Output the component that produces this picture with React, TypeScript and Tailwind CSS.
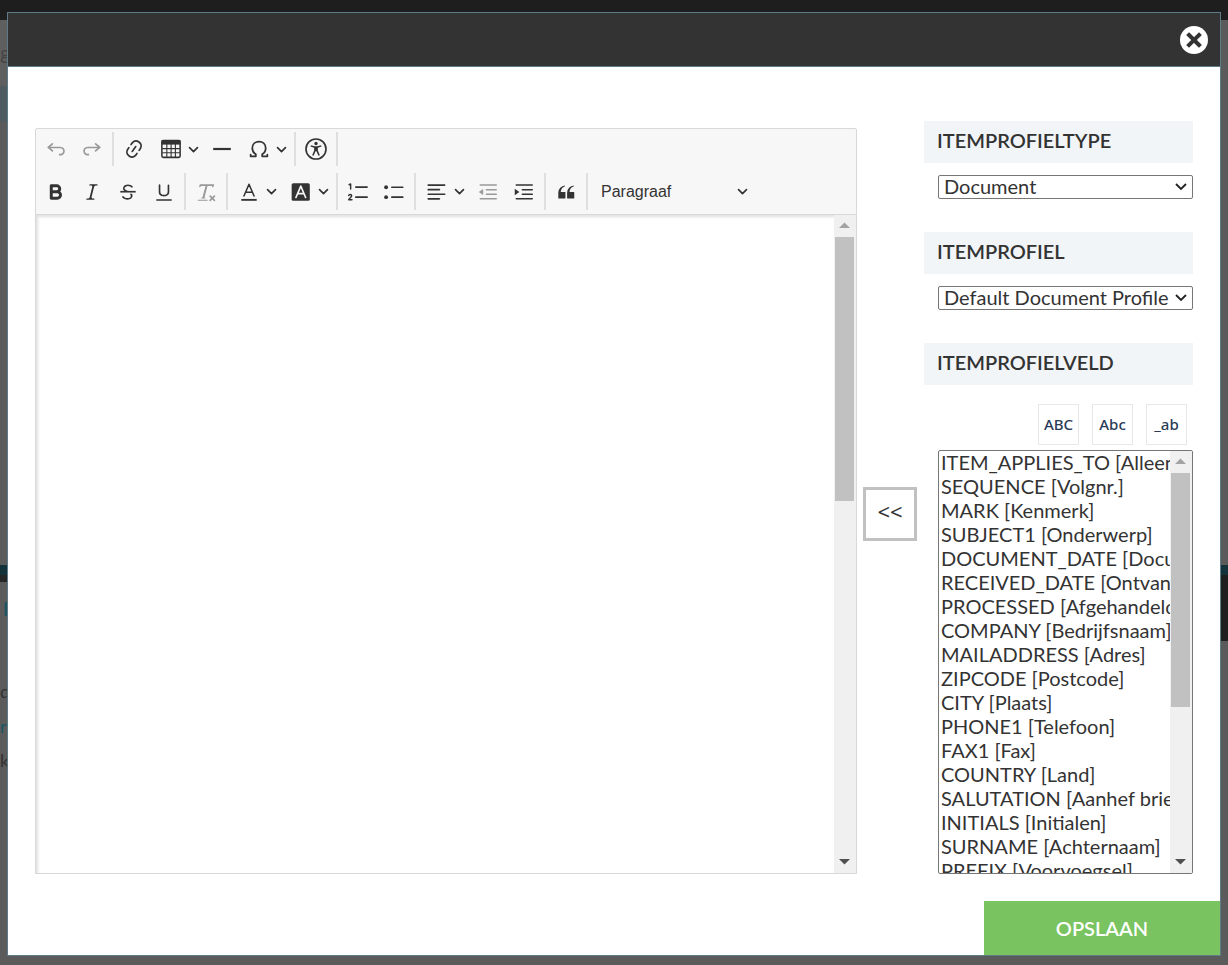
import { useState } from "react";
import type { ReactNode, SelectHTMLAttributes } from "react";

const fields = [
  "ITEM_APPLIES_TO [Alleen]",
  "SEQUENCE [Volgnr.]",
  "MARK [Kenmerk]",
  "SUBJECT1 [Onderwerp]",
  "DOCUMENT_DATE [Documentdatum]",
  "RECEIVED_DATE [Ontvangen]",
  "PROCESSED [Afgehandeld]",
  "COMPANY [Bedrijfsnaam]",
  "MAILADDRESS [Adres]",
  "ZIPCODE [Postcode]",
  "CITY [Plaats]",
  "PHONE1 [Telefoon]",
  "FAX1 [Fax]",
  "COUNTRY [Land]",
  "SALUTATION [Aanhef brief]",
  "INITIALS [Initialen]",
  "SURNAME [Achternaam]",
  "PREFIX [Voorvoegsel]",
];

const undoPath =
  "m5.042 9.367 2.189 1.837a.75.75 0 0 1-.965 1.149l-3.788-3.18a.747.747 0 0 1-.21-.284.75.75 0 0 1 .17-.945L6.23 4.762a.75.75 0 1 1 .964 1.15L4.863 7.866h8.917A.75.75 0 0 1 14 7.9a4 4 0 1 1-1.477 7.718l.344-1.489a2.5 2.5 0 1 0 1.094-4.73l.008-.032H5.042z";

function Icon({ children }: { children: ReactNode }) {
  return (
    <svg viewBox="0 0 20 20" className="size-[22px] shrink-0" fill="currentColor" aria-hidden="true">
      {children}
    </svg>
  );
}

function Lines({ d, width = 1.5 }: { d: string; width?: number }) {
  return (
    <path d={d} fill="none" stroke="currentColor" strokeWidth={width} strokeLinecap="round" strokeLinejoin="round" />
  );
}

function Chevron() {
  return (
    <svg viewBox="0 0 10 10" className="size-[11px] shrink-0" aria-hidden="true">
      <path d="M1.4 3.3 5 6.900l3.600-3.600" fill="none" stroke="currentColor" strokeWidth="1.500" strokeLinecap="round" strokeLinejoin="round" />
    </svg>
  );
}

function Tool({ label, disabled, children }: { label: string; disabled?: boolean; children: ReactNode }) {
  return (
    <button
      type="button"
      aria-label={label}
      disabled={disabled}
      className="flex h-9 w-9 shrink-0 items-center justify-center rounded-sm text-[#333] disabled:text-[#999]">
      <Icon>{children}</Icon>
    </button>
  );
}

function DropTool({ label, children }: { label: string; children: ReactNode }) {
  return (
    <button
      type="button"
      aria-label={label}
      className="flex h-9 w-[52px] shrink-0 items-center justify-between rounded-sm pr-[5px] pl-2 text-[#333]">
      <Icon>{children}</Icon>
      <Chevron />
    </button>
  );
}

function Separator() {
  return <span className="mx-[2px] w-[2px] shrink-0 self-stretch bg-[#dfdfdf]" />;
}

function Toolbar() {
  return (
    <div
      role="toolbar"
      aria-label="Opmaak"
      className="flex flex-col gap-px rounded-t-xs border border-[#d8d8d8] bg-[#f7f7f7] pb-px pl-[2px]">
      <div className="flex h-10 items-center py-[3px]">
        <Tool label="Ongedaan maken" disabled>
          <path d={undoPath} />
        </Tool>
        <Tool label="Opnieuw" disabled>
          <path d={undoPath} transform="matrix(-1 0 0 1 20 0)" />
        </Tool>
        <Separator />
        <Tool label="Link">
          <path d="m11.077 15 .991-1.416a.75.75 0 1 1 1.229.86l-1.148 1.64a.748.748 0 0 1-.217.206 5.251 5.251 0 0 1-8.503-5.955.741.741 0 0 1 .12-.274l1.147-1.639a.75.75 0 1 1 1.228.86L4.933 10.7l.006.003a3.75 3.75 0 0 0 6.132 4.294l.006.004zm5.494-5.335a.748.748 0 0 1-.12.274l-1.147 1.639a.75.75 0 1 1-1.228-.86l.86-1.23a3.75 3.75 0 0 0-6.144-4.301l-.86 1.229a.75.75 0 0 1-1.229-.86l1.148-1.64a.748.748 0 0 1 .217-.206 5.251 5.251 0 0 1 8.503 5.955zm-4.563-2.532a.75.75 0 0 1 .184 1.045l-3.155 4.505a.75.75 0 1 1-1.229-.86l3.155-4.506a.75.75 0 0 1 1.045-.184z" />
        </Tool>
        <DropTool label="Tabel">
          <rect x="1.7" y="2.2" width="16.600" height="15.400" rx="1.200" fill="none" stroke="currentColor" strokeWidth="1.400" />
          <path d="M1.500 2h17v4h-17z" />
          <path d="M2 9.700h16M2 13.400h16M6.200 5v12.500M10.100 5v12.500M14 5v12.500" fill="none" stroke="currentColor" strokeWidth="1" />
        </DropTool>
        <Tool label="Horizontale lijn">
          <path d="M2 9h16v2H2z" />
        </Tool>
        <DropTool label="Speciale tekens">
          <Lines d="M2.400 16.600h4.700v-1.800C4.800 13.400 3.900 11.500 3.900 9.300 3.900 5.700 6.500 3.200 10 3.200s6.100 2.500 6.100 6.100c0 2.200-.9 4.100-3.200 5.500v1.800h4.700M2.400 16.600v-1.400M17.600 16.600v-1.400" width={1.6} />
        </DropTool>
        <Separator />
        <Tool label="Toegankelijkheid">
          <circle cx="10" cy="10" r="9.100" fill="none" stroke="currentColor" strokeWidth="1.500" />
          <circle cx="10" cy="5" r="1.500" />
          <path d="M5.300 6.600 9 7.500h2l3.700-.9.300 1.200-3.300 1v2.500l1.800 4.300-1.300.5L10.400 12h-.8l-1.800 4.100-1.300-.5 1.800-4.300V8.800L5 7.800z" />
        </Tool>
        <Separator />
      </div>

      <div className="flex h-[43px] items-center py-[3px]">
        <Tool label="Vet">
          <path d="M5.700 4.400h5a2.700 2.700 0 0 1 0 5.400h-5zM5.700 9.800h5.500a2.900 2.900 0 0 1 0 5.800H5.700z" fill="none" stroke="currentColor" strokeWidth="2.700" strokeLinejoin="round" />
        </Tool>
        <Tool label="Cursief">
          <path d="m9.586 14.633.021.004c-.036.335.095.655.393.962.082.083.173.15.274.201h1.474a.6.6 0 1 1 0 1.2H5.304a.6.6 0 0 1 0-1.2h1.15c.474-.07.809-.182 1.005-.334.157-.122.291-.32.404-.597l2.416-9.55a1.053 1.053 0 0 0-.281-.823 1.12 1.12 0 0 0-.442-.296H8.15a.6.6 0 0 1 0-1.2h6.443a.6.6 0 1 1 0 1.2h-1.195c-.376.056-.65.155-.823.296-.215.175-.423.439-.623.79l-2.366 9.347z" />
        </Tool>
        <Tool label="Doorhalen">
          <path d="M7 16.4c-.8-.4-1.5-.9-2.2-1.5a.6.6 0 0 1-.2-.5l.3-.6h1c1 1.2 2.1 1.7 3.7 1.7 1 0 1.8-.3 2.3-.6.6-.4.6-1.2.6-1.3.2-1.2-.9-2.1-.9-2.1h2.1c.3.7.4 1.200.4 1.700v.8l-.6 1.200c-.6.8-1.100 1-1.600 1.200a6 6 0 0 1-2.400.6c-1 0-1.800-.3-2.500-.6zM6.800 9 6 8.300c-.4-.5-.5-.8-.5-1.600 0-.7.1-1.300.5-1.800.4-.6 1-1 1.600-1.300a6.300 6.300 0 0 1 4.700 0 4 4 0 0 1 1.700 1l.3.7c0 .1.2.4-.2.7-.4.2-.9.1-1 0a3 3 0 0 0-1.200-1c-.4-.2-1-.3-2-.4-.7 0-1.400.2-2 .6-.8.6-1 .8-1 1.500 0 .8.5 1 1.200 1.500.6.4 1.100.7 1.900 1H6.800z" />
          <path d="M3 10.500V9h14v1.500z" />
        </Tool>
        <Tool label="Onderlijnen">
          <path d="M3 18v-1.500h14V18zm2.200-8V3.600c0-.4.4-.6.8-.6.3 0 .7.2.7.6v6.200c0 2 1.300 2.800 3.200 2.800 1.900 0 3.400-.9 3.400-2.900V3.600c0-.3.4-.5.8-.5.3 0 .7.2.7.5V10c0 2.700-2.200 4-4.900 4-2.600 0-4.700-1.200-4.700-4z" />
        </Tool>
        <Separator />
        <Tool label="Opmaak verwijderen" disabled>
          <path d="M8.690 14.915c.053.052.173.083.360.093a.366.366 0 0 1 .345.485l-.003.010a.738.738 0 0 1-.697.497h-2.670a.374.374 0 0 1-.353-.496l.013-.038a.681.681 0 0 1 .644-.458c.197-.012.325-.043.386-.093a.28.28 0 0 0 .072-.110L9.592 4.500H6.269c-.359-.017-.609.013-.750.090-.142.078-.289.265-.442.563-.192.290-.516.464-.864.464H4.170a.43.43 0 0 1-.407-.569L4.460 3h13.080l-.620 2.043a.81.81 0 0 1-.775.574h-.114a.486.486 0 0 1-.486-.486c.001-.284-.054-.464-.167-.540-.112-.076-.367-.106-.766-.091h-3.280l-2.680 10.257c-.006.074.007.127.038.158zM3 17h8a.5.5 0 1 1 0 1H3a.5.5 0 1 1 0-1zm11.299 1.170a.75.75 0 1 1-1.060-1.060l1.414-1.415-1.415-1.414a.75.75 0 0 1 1.060-1.060l1.415 1.414 1.414-1.415a.75.75 0 0 1 1.060 1.060l-1.413 1.415 1.414 1.415a.75.75 0 0 1-1.060 1.060l-1.415-1.414-1.414 1.414z" />
        </Tool>
        <Separator />
        <DropTool label="Tekstkleur">
          <Lines d="M5.400 13.600 10 2.900l4.600 10.700M6.900 10.200h6.200" width={1.4} />
          <path d="M3 16.300h14V18H3z" />
        </DropTool>
        <DropTool label="Achtergrondkleur">
          <rect x="1.500" y="2" width="16.500" height="16" rx="1.500" />
          <path d="M5.400 15 9.800 4.600 14.200 15M6.900 11.500h5.800" fill="none" stroke="#f7f7f7" strokeWidth="1.500" strokeLinecap="round" strokeLinejoin="round" />
        </DropTool>
        <Separator />
        <Tool label="Genummerde lijst">
          <Lines d="M8 5.500h10.300M8 14.700h10.300" />
          <Lines d="M1.900 3.400 3.300 2.700v4.600M1.500 13.300c.3-1.400 2.900-1.300 2.700.2-.1 1-1.700 1.900-2.700 3.500h3" width={1.3} />
        </Tool>
        <Tool label="Opsomming">
          <circle cx="2.800" cy="5.700" r="1.750" />
          <circle cx="2.800" cy="14.700" r="1.750" />
          <Lines d="M8 5.700h10M8 14.700h10" />
        </Tool>
        <Separator />
        <DropTool label="Uitlijning">
          <Lines d="M2 3.700h15M2 7.900h10.200M2 12h15M2 16.200h10.200" />
        </DropTool>
        <Tool label="Inspringing verkleinen" disabled>
          <Lines d="M3 3.700h14.500M8.500 7.900h9M8.500 12h9M3 16.200h14.500" width={1.4} />
          <path d="M5.600 7.300v5.400L1.600 10z" />
        </Tool>
        <Tool label="Inspringing vergroten">
          <Lines d="M3 3.700h14.500M8.500 7.900h9M8.500 12h9M3 16.200h14.500" width={1.4} />
          <path d="M1.600 7.100v5.800L5.800 10z" />
        </Tool>
        <Separator />
        <Tool label="Citaat">
          <path d="M3 10.423a6.500 6.500 0 0 1 6.056-6.408l.038.670C6.448 5.423 5.354 7.663 5.220 10H9c.552 0 .5.432.5.986v4.511c0 .554-.448.503-1 .503h-5c-.552 0-.5-.449-.5-1.003v-4.574zm8 0a6.500 6.500 0 0 1 6.056-6.408l.038.670c-2.646.739-3.740 2.979-3.873 5.315H17c.552 0 .5.432.5.986v4.511c0 .554-.448.503-1 .503h-5c-.552 0-.5-.449-.5-1.003v-4.574z" />
        </Tool>
        <Separator />
        <button
          type="button"
          className="flex h-9 w-[162px] shrink-0 items-center justify-between pr-1 pl-[11px] font-['Liberation_Sans',sans-serif] text-base text-[#333]">
          Paragraaf
          <Chevron />
        </button>
      </div>
    </div>
  );
}

// thumb is the share of the track that is in view, in percent
function Scrollbar({ thumb }: { thumb: number }) {
  return (
    <div className="flex w-[22px] shrink-0 flex-col bg-[#f0f0f0]" aria-hidden="true">
      <svg viewBox="0 0 22 22" className="size-[22px] shrink-0">
        <path d="M5 13 10.500 7.500 16 13z" fill="#a3a3a3" />
      </svg>
      <div className="flex-1 pr-[2px] pl-px">
        <div className="bg-[#c1c1c1]" style={{ height: `${thumb}%` }} />
      </div>
      <svg viewBox="0 0 22 22" className="size-[22px] shrink-0">
        <path d="M5 8h11l-5.500 5.500z" fill="#505050" />
      </svg>
    </div>
  );
}

function PanelTitle({ htmlFor, children }: { htmlFor: string; children: ReactNode }) {
  return (
    <label
      htmlFor={htmlFor}
      className="flex h-[42px] shrink-0 items-center bg-[#f1f5f7] px-[13px] pb-1 text-xl font-semibold text-[#333]">
      {children}
    </label>
  );
}

function Dropdown(props: SelectHTMLAttributes<HTMLSelectElement>) {
  return (
    <div className="relative mt-3 mb-[33px] ml-[14px] flex h-6">
      <select
        {...props}
        className="min-w-0 flex-1 appearance-none rounded-xs border border-[#767676] bg-white pr-5 pb-[2px] pl-[5px] text-xl leading-5 text-[#333]"
      />
      <svg viewBox="0 0 12 12" className="pointer-events-none absolute top-[6px] right-[6px] size-3" aria-hidden="true">
        <path d="m1 3 5 5 5-5" fill="none" stroke="#222" strokeWidth="1.800" />
      </svg>
    </div>
  );
}

function CaseButton({ children }: { children: ReactNode }) {
  return (
    <button
      type="button"
      className="flex size-[41px] items-center justify-center border border-[#e8e8e8] bg-white font-['Noto_Sans',sans-serif] text-[15px] font-medium text-[#2a3b57]">
      {children}
    </button>
  );
}

// The dimmed page, of which only the edges stick out from behind the dialog
function Backdrop() {
  return (
    <div className="absolute inset-0 flex flex-col overflow-hidden bg-[#5b5b5b]" aria-hidden="true">
      <div className="h-5 bg-[#1e1e1e]" />
      <div className="h-[66px] w-4 bg-[#5f5f5f] pt-4 text-xl leading-8 text-[#444]">g</div>
      <div className="h-9 w-4 bg-[#4f5b5e]" />
      <div className="h-[443px]" />
      <div className="h-[10px] bg-[#14323a]" />
      <div className="flex items-start justify-between">
        <div className="flex w-4 flex-col text-lg leading-6 text-[#333]">
          <span className="h-[7px] bg-[#262626]" />
          <span className="mt-[15px] pl-[3px] font-bold text-[#1d5561]">E</span>
          <span className="mt-[58px]">d</span>
          <span className="mt-[11px] text-[#1d5561]">rc</span>
          <span className="mt-[10px]">k</span>
        </div>
        <div className="h-[66px] w-4 bg-[#1e1e1e]" />
      </div>
    </div>
  );
}

export default function App() {
  const [text, setText] = useState("");
  const [selected, setSelected] = useState<string[]>([]);

  return (
    <div className="relative flex min-h-screen px-[7px] pt-3 pb-[9px] font-[Lato,sans-serif] text-[#333]">
      <Backdrop />

      <div role="dialog" aria-label="Itemprofiel" className="relative flex flex-1 flex-col border border-[#5f7b87] bg-white">
        <header className="flex h-[54px] shrink-0 items-center justify-end border-b border-[#5f7b87] bg-[#333] pr-3">
          <button type="button" aria-label="Sluiten">
            <svg viewBox="0 0 28 28" className="size-7" aria-hidden="true">
              <circle cx="14" cy="14" r="14" fill="#fff" />
              <path d="m9 9 10 10M19 9 9 19" stroke="#333" strokeWidth="4" strokeLinecap="square" />
            </svg>
          </button>
        </header>

        <main className="flex flex-1 px-[27px] pt-[54px]">
          <section className="flex min-w-0 flex-1 flex-col pt-[7px]">
            <Toolbar />
            <div className="flex flex-1 border-x border-b border-[#d8d8d8]">
              <textarea
                aria-label="Tekst"
                value={text}
                onChange={(e) => setText(e.target.value)}
                className="min-w-0 flex-1 resize-none p-3 shadow-[inset_2px_2px_3px_rgba(0,0,0,0.12)] outline-none"
              />
              <Scrollbar thumb={43} />
            </div>
          </section>

          <div className="flex items-center pr-[7px] pl-[6px]">
            <button
              type="button"
              aria-label="Veld invoegen"
              className="mt-8 flex size-[54px] items-center justify-center border-3 border-[#c1c1c1] bg-white pb-1 font-['Noto_Sans',sans-serif] text-[22px]">
              &lt;&lt;
            </button>
          </div>

          <aside className="flex w-[269px] flex-col">
            <PanelTitle htmlFor="type">ITEMPROFIELTYPE</PanelTitle>
            <Dropdown id="type">
              <option>Document</option>
            </Dropdown>

            <PanelTitle htmlFor="profile">ITEMPROFIEL</PanelTitle>
            <Dropdown id="profile">
              <option>Default Document Profile</option>
            </Dropdown>

            <PanelTitle htmlFor="field">ITEMPROFIELVELD</PanelTitle>
            <div className="mt-[19px] mb-[5px] flex justify-end gap-[13px] pr-[6px]">
              <CaseButton>ABC</CaseButton>
              <CaseButton>Abc</CaseButton>
              <CaseButton>_ab</CaseButton>
            </div>
            <div className="relative ml-[14px] flex-1">
              <div className="absolute inset-0 flex overflow-hidden rounded-xs border border-[#767676]">
                <select
                  id="field"
                  multiple
                  value={selected}
                  onChange={(e) => setSelected(Array.from(e.target.selectedOptions, (o) => o.value))}
                  className="-mt-px min-w-0 flex-1 overflow-hidden text-xl text-[#333] outline-none">
                  {fields.map((field) => (
                    <option key={field} className="h-6 px-[2px] py-0 leading-6">
                      {field}
                    </option>
                  ))}
                </select>
                <Scrollbar thumb={62} />
              </div>
            </div>
          </aside>
        </main>

        <footer className="mt-[27px] flex justify-end">
          <button type="button" className="h-[54px] w-[236px] bg-[#79c460] text-xl font-semibold text-white">
            OPSLAAN
          </button>
        </footer>
      </div>
    </div>
  );
}
